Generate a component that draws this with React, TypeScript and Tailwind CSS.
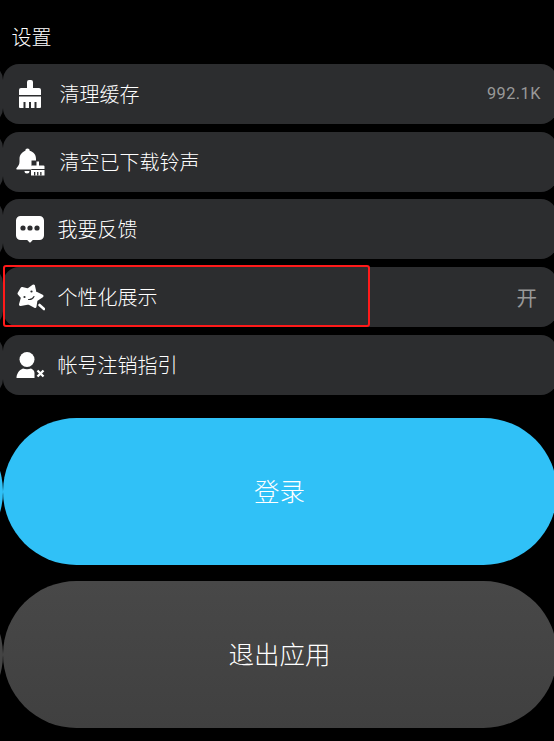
const font = "[font-family:'Noto_Sans_CJK_SC','Noto_Sans',sans-serif]";

function BroomIcon() {
  return (
    <svg width="30" height="30" viewBox="0 0 30 30" aria-hidden="true">
      <path
        fill="#fff"
        d="M12 3a2 2 0 0 1 2-2h2a2 2 0 0 1 2 2v6h6a2 2 0 0 1 2 2v5H4v-5a2 2 0 0 1 2-2h6zM4 17.5h22V28a1 1 0 0 1-1 1H5a1 1 0 0 1-1-1z"
      />
      <path fill="#2c2d2f" d="M8.5 23h2v6h-2zM14 23h2v6h-2zM19.5 23h2v6h-2z" />
    </svg>
  );
}

function BellIcon() {
  return (
    <svg width="30" height="30" viewBox="0 0 30 30" aria-hidden="true">
      <path
        fill="#fff"
        d="M12.5 1.5a2.2 2.2 0 0 1 2.2 2.3c4 1 6.300 4.200 6.300 8.200v1.500h-4.500v9H2.300c-.9 0-1.300-1-.7-1.600 1.800-1.800 2.900-3.600 2.900-6.400V12c0-4 2.900-7.200 5.800-8.200a2.200 2.200 0 0 1 2.200-2.300zM9.500 24h5a2.500 2.500 0 0 1-5 0z"
      />
      <path
        fill="#fff"
        d="M21.500 14.500h2.500v4h4.500a1 1 0 0 1 1 1V22H16v-2.500a1 1 0 0 1 1-1h4.500zM16 23h13.500v5.500H16z"
      />
      <path fill="#2c2d2f" d="M19 25h1.300v3.500H19zM22.100 25h1.300v3.500h-1.300zM25.200 25h1.300v3.500h-1.300z" />
    </svg>
  );
}

function BubbleIcon() {
  return (
    <svg width="30" height="30" viewBox="0 0 30 30" aria-hidden="true">
      <path
        fill="#fff"
        d="M5.500 2h19A4.500 4.500 0 0 1 29 6.500v15a4.500 4.500 0 0 1-4.500 4.500h-6.700l-2.100 2.200a1 1 0 0 1-1.400 0L12.200 26H5.500A4.500 4.500 0 0 1 1 21.500v-15A4.500 4.500 0 0 1 5.500 2z"
      />
      <circle cx="8" cy="14" r="2.600" fill="#2c2d2f" />
      <circle cx="15" cy="14" r="2.600" fill="#2c2d2f" />
      <circle cx="22" cy="14" r="2.600" fill="#2c2d2f" />
    </svg>
  );
}

function StarIcon() {
  return (
    <svg width="30" height="30" viewBox="0 0 30 30" aria-hidden="true">
      <path
        fill="#fff"
        stroke="#fff"
        strokeWidth="3"
        strokeLinejoin="round"
        d="M7 6.500l6 1.500 5.500-4 1.500 6.500 7 3.500-6 4-1 6.500-6.500-3.500-8 1.500 2-7L4 11.500z"
      />
      <circle cx="9.500" cy="15" r="1.100" fill="#2c2d2f" />
      <circle cx="16.500" cy="9.500" r="1.100" fill="#2c2d2f" />
      <path d="M13.500 17.500c2.500 .3 4.500-1 5.500-3" fill="none" stroke="#2c2d2f" strokeWidth="1.100" strokeLinecap="round" />
      <path d="M24.500 23l4.500 4" fill="none" stroke="#fff" strokeWidth="2.600" strokeLinecap="round" />
    </svg>
  );
}

function PersonIcon() {
  return (
    <svg width="30" height="30" viewBox="0 0 30 30" aria-hidden="true">
      <circle cx="12" cy="9.500" r="7.500" fill="#fff" />
      <path fill="#fff" d="M8 18.500c2.500 1 5.500 1 8 0 2.500 1 3.500 3 3.500 4.500v5H1.500c0-4 2.500-8 6.500-9.500z" />
      <path d="M22.500 20.500l6 6M28.500 20.500l-6 6" fill="none" stroke="#fff" strokeWidth="2.300" />
    </svg>
  );
}

const rows = [
  { label: "清理缓存", icon: <BroomIcon />, gap: "gap-[15px]", value: "992.1K" },
  { label: "清空已下载铃声", icon: <BellIcon />, gap: "gap-[15px]" },
  { label: "我要反馈", icon: <BubbleIcon />, gap: "gap-[13px]" },
  { label: "个性化展示", icon: <StarIcon />, gap: "gap-[13px]", toggle: "开", marked: true },
  { label: "帐号注销指引", icon: <PersonIcon />, gap: "gap-[13px]" },
];

export default function App() {
  return (
    <div className={`h-[741px] w-[554px] overflow-hidden bg-black pl-[3px] font-light text-white ${font}`}>
      <h1 className="pl-[8.5px] pt-[22px] text-[20px] leading-[30px] font-light">设置</h1>

      <div className="mt-[12px] flex w-[554px] flex-col gap-[7.7px]">
        {rows.map((row) => (
          <div
            key={row.label}
            className="relative flex h-[60px] items-center rounded-[16px] bg-[#2c2d2f] pl-[12px] pr-[16px]"
          >
            <span className="absolute right-full top-0 h-full w-[30px] rounded-r-[16px] bg-[#2c2d2f]" />
            <div className={`flex items-center ${row.gap}`}>
              {row.icon}
              <span className="ml-[-0.5px] text-[20px] leading-[30px] text-white">{row.label}</span>
            </div>
            {row.value && (
              <span className="ml-auto font-['Roboto'] text-[16.3px] font-normal tracking-[0.5px] text-[#999999]">{row.value}</span>
            )}
            {row.toggle && <span className="ml-auto pr-[4px] pt-[1px] text-[20.5px] font-normal text-[#999999]">{row.toggle}</span>}
            {row.marked && (
              <span className="absolute left-0 top-[-2px] h-[62px] w-[367px] rounded-[3px] border-2 border-[#ff1a1a]" />
            )}
          </div>
        ))}
      </div>

      <div className="mt-[23px] flex w-[554px] flex-col gap-[16px]">
        <div className="relative flex h-[147px] items-center justify-center rounded-[73.5px] bg-[#30c1f7] pb-[2px] pr-[1px] text-[25.5px]">
          <span className="absolute right-full top-0 h-full w-[80px] rounded-r-[73.5px] bg-[#30c1f7]" />
          登录
        </div>
        <div className="relative flex h-[147px] items-center justify-center rounded-[73.5px] bg-gradient-to-b from-[#484848] to-[#404040] pb-[2px] pr-[1px] text-[25.5px]">
          <span className="absolute right-full top-0 h-full w-[80px] rounded-r-[73.5px] bg-[#444444]" />
          退出应用
        </div>
      </div>
    </div>
  );
}
